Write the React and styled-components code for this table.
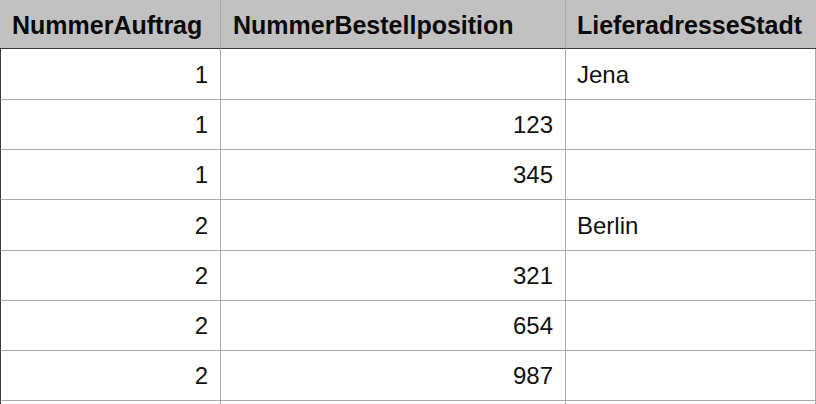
import React from "react";
import styled, { createGlobalStyle } from "styled-components";

const Global = createGlobalStyle`
  html, body { margin: 0; padding: 0; background: #ffffff; }
  body { font-family: "Liberation Sans", Arial, Helvetica, sans-serif; }
  * { box-sizing: border-box; }
`;

const Grid = styled.div`
  display: grid;
  grid-template-columns: 221px 345px 250px;
  width: 816px;
  overflow: hidden;
  height: 404px;
`;

const HeadCell = styled.div`
  height: 49px;
  background: #c0c1c0;
  border-bottom: 1px solid #3a3a3a;
  border-right: ${(p) => (p.$last ? "none" : "1px solid #a9a9a9")};
  display: flex;
  align-items: center;
  padding: 2px 11px 0 ${(p) => (p.$last ? "11px" : "12px")};
  font-weight: 700;
  font-size: 25px;
  color: #0a0a0a;
  white-space: nowrap;
`;

const Cell = styled.div`
  height: ${(p) => (p.$tall ? "51px" : "50px")};
  border-bottom: 1px solid #ababab;
  border-right: 1px solid #ababab;
  border-left: ${(p) => (p.$first ? "1px solid #3a3a3a" : "none")};
  display: flex;
  align-items: center;
  justify-content: ${(p) => (p.$num ? "flex-end" : "flex-start")};
  padding: 1px 12px 0 11px;
  font-size: 24px;
  color: #111;
  white-space: nowrap;
`;

const rows = [
  [1, "", "Jena"],
  [1, 123, ""],
  [1, 345, ""],
  [2, "", "Berlin"],
  [2, 321, ""],
  [2, 654, ""],
  [2, 987, ""],
  ["", "", ""],
];

export default function App() {
  return (
    <>
      <Global />
      <Grid>
        <HeadCell>NummerAuftrag</HeadCell>
        <HeadCell>NummerBestellposition</HeadCell>
        <HeadCell $last>LieferadresseStadt</HeadCell>
        {rows.map((r, i) => {
          const tall = i === 0 || i === 3;
          return (
            <React.Fragment key={i}>
              <Cell $first $num $tall={tall}>{r[0]}</Cell>
              <Cell $num $tall={tall}>{r[1]}</Cell>
              <Cell $tall={tall}>{r[2]}</Cell>
            </React.Fragment>
          );
        })}
      </Grid>
    </>
  );
}
